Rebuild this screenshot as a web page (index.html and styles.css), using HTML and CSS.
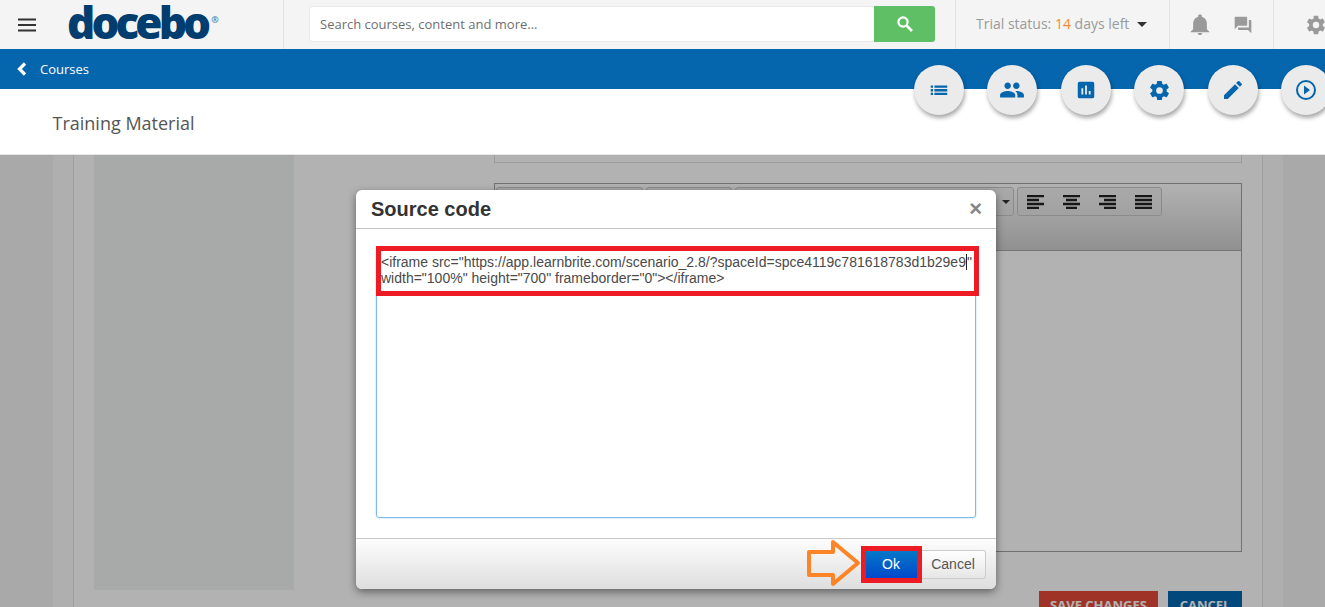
FILE: index.html
```html
<!DOCTYPE html>
<html lang="en">
<head>
<meta charset="utf-8">
<title>Training Material</title>
<link rel="stylesheet" href="styles.css">
</head>
<body>
<div class="page">
  <header class="topbar">
    <div class="brand">
      <svg class="menu" width="20" height="14" viewBox="0 0 20 14"><path d="M1 1.500h18M1 7h18M1 12.500h18" stroke="#333" stroke-width="2"/></svg>
      <span class="logo">docebo</span><span class="reg">®</span>
    </div>
    <div class="searchwrap">
      <div class="search">
        <div class="search-input">Search courses, content and more...</div>
        <div class="search-btn"><svg width="18" height="18" viewBox="0 0 18 18"><circle cx="7" cy="7" r="4.600" fill="none" stroke="#fff" stroke-width="2.200"/><path d="M10.500 10.500L16 16" stroke="#fff" stroke-width="2.600"/></svg></div>
      </div>
    </div>
    <div class="trial">Trial status: <span class="days">14</span> days left<i class="caret"></i></div>
    <div class="notes">
      <svg width="22" height="22" viewBox="0 0 24 24" fill="#9a9a9a"><path d="M12 23c1.300 0 2.400-1 2.400-2.400H9.600c0 1.400 1.100 2.400 2.400 2.400zm7.500-6.500v-6c0-3.700-2-6.700-5.500-7.500V2.200C14 1 13.100.5 12 .5S10 1 10 2.200V3c-3.500.8-5.500 3.800-5.500 7.500v6L2 19v.8h20V19z"/></svg>
      <svg width="20" height="20" viewBox="0 0 24 24" fill="#9a9a9a"><path d="M21 6h-2v9H6v2c0 .6.400 1 1 1h11l4 4V7c0-.6-.4-1-1-1zm-4 6V3c0-.6-.4-1-1-1H3c-.6 0-1 .4-1 1v14l4-4h10c.6 0 1-.4 1-1z"/></svg>
    </div>
    <div class="cog">
      <svg width="22" height="22" viewBox="0 0 24 24" fill="#9a9a9a"><path d="M19.400 13c.04-.3.06-.65.06-1s-.02-.7-.06-1l2.100-1.650c.2-.15.25-.43.12-.65l-2-3.460c-.12-.22-.4-.3-.6-.22l-2.500 1c-.52-.4-1.080-.73-1.700-.98l-.37-2.650A.5.500 0 0 0 14 2h-4c-.25 0-.46.180-.5.420l-.37 2.650c-.62.250-1.180.590-1.700.980l-2.500-1c-.22-.08-.48 0-.6.220l-2 3.460c-.13.220-.07.500.12.650L4.570 11c-.04.320-.07.660-.07 1s.03.680.07 1l-2.100 1.650c-.2.150-.25.430-.12.650l2 3.460c.12.220.38.300.6.220l2.500-1c.52.400 1.080.730 1.700.980l.37 2.650c.04.240.25.420.5.420h4c.25 0 .46-.180.5-.420l.37-2.650c.62-.250 1.180-.590 1.700-.980l2.500 1c.22.080.48 0 .6-.220l2-3.460c.12-.220.07-.500-.12-.650zM12 15.500A3.500 3.500 0 1 1 12 8.500a3.500 3.500 0 0 1 0 7z"/></svg>
    </div>
  </header>
  <nav class="bluebar">
    <svg width="10" height="14" viewBox="0 0 10 14"><path d="M8 1.500L2.500 7 8 12.500" fill="none" stroke="#fff" stroke-width="3.200"/></svg>
    <span class="crumb">Courses</span>
  </nav>
  <div class="titlebar"><h1 class="title">Training Material</h1></div>
  <main class="back">
    <div class="back-frame">
      <div class="sidebar"></div>
      <div class="editor-col">
        <div class="field-top"></div>
        <div class="editor">
          <div class="toolbar">
            <div class="tool w1"></div>
            <div class="tool w2"></div>
            <div class="tool w3"><i class="mini-caret"></i></div>
            <div class="tool aligns">
              <span class="al"><svg width="17" height="14" viewBox="0 0 17 14"><path d="M0 1h17M0 5h12M0 9h17M0 13h12" stroke="#222" stroke-width="2.400"/></svg></span>
              <span class="al"><svg width="17" height="14" viewBox="0 0 17 14"><path d="M0 1h17M3 5h11M0 9h17M3 13h11" stroke="#222" stroke-width="2.400"/></svg></span>
              <span class="al"><svg width="17" height="14" viewBox="0 0 17 14"><path d="M0 1h17M5 5h12M0 9h17M5 13h12" stroke="#222" stroke-width="2.400"/></svg></span>
              <span class="al"><svg width="17" height="14" viewBox="0 0 17 14"><path d="M0 1h17M0 5h17M0 9h17M0 13h17" stroke="#222" stroke-width="2.400"/></svg></span>
            </div>
          </div>
        </div>
        <div class="actions">
          <span class="act save">SAVE CHANGES</span>
          <span class="act cancel">CANCEL</span>
        </div>
      </div>
    </div>
  </main>
  <div class="scrim"></div>
  <div class="fabs">
    <span class="fab"><svg width="22" height="22" viewBox="0 0 24 24" fill="#0565ad"><path d="M3 7h2.500v2.500H3zm0 4h2.500v2.500H3zm0 4h2.500v2.500H3zM7 7h14v2.500H7zm0 4h14v2.500H7zm0 4h14v2.500H7z"/></svg></span>
    <span class="fab"><svg width="26" height="26" viewBox="0 0 24 24" fill="#0565ad"><path d="M16 11c1.700 0 3-1.400 3-3s-1.300-3-3-3-3 1.400-3 3 1.300 3 3 3zm-8 0c1.700 0 3-1.400 3-3S9.700 5 8 5 5 6.400 5 8s1.300 3 3 3zm0 2c-2.300 0-7 1.200-7 3.500V19h14v-2.500C15 14.200 10.300 13 8 13zm8 0h-1c1.200.9 2 2 2 3.500V19h6v-2.500c0-2.300-4.700-3.500-7-3.500z"/></svg></span>
    <span class="fab"><svg width="22" height="22" viewBox="0 0 24 24" fill="#0565ad"><path d="M19 3H5a2 2 0 0 0-2 2v14a2 2 0 0 0 2 2h14a2 2 0 0 0 2-2V5a2 2 0 0 0-2-2zM9 17H7v-7h2zm4 0h-2V7h2zm4 0h-2v-4h2z"/></svg></span>
    <span class="fab"><svg width="23" height="23" viewBox="0 0 24 24" fill="#0565ad"><path d="M19.400 13c.04-.3.06-.65.06-1s-.02-.7-.06-1l2.100-1.650c.2-.15.25-.43.12-.65l-2-3.460c-.12-.22-.4-.3-.6-.22l-2.500 1c-.52-.4-1.080-.73-1.700-.98l-.37-2.650A.5.500 0 0 0 14 2h-4c-.25 0-.46.180-.5.420l-.37 2.650c-.62.250-1.180.590-1.700.980l-2.500-1c-.22-.08-.48 0-.6.220l-2 3.460c-.13.220-.07.500.12.650L4.570 11c-.04.320-.07.660-.07 1s.03.680.07 1l-2.100 1.650c-.2.150-.25.430-.12.650l2 3.460c.12.220.38.300.6.220l2.500-1c.52.400 1.080.730 1.700.980l.37 2.650c.04.240.25.420.5.420h4c.25 0 .46-.180.5-.420l.37-2.650c.62-.250 1.180-.590 1.700-.980l2.500 1c.22.080.48 0 .6-.220l2-3.460c.12-.220.07-.500-.12-.650zM12 15.500A3.500 3.500 0 1 1 12 8.500a3.500 3.500 0 0 1 0 7z"/></svg></span>
    <span class="fab"><svg width="24" height="24" viewBox="0 0 24 24" fill="#0565ad"><path d="M3 17.250V21h3.750L17.800 9.940l-3.750-3.750zM20.700 7.040a1 1 0 0 0 0-1.410l-2.340-2.340a1 1 0 0 0-1.410 0l-1.830 1.830 3.750 3.750z"/></svg></span>
    <span class="fab"><svg width="24" height="24" viewBox="0 0 24 24" fill="#0565ad"><path d="M12 2a10 10 0 1 0 0 20 10 10 0 0 0 0-20zm0 18a8 8 0 1 1 0-16 8 8 0 0 1 0 16zM10 16.500l6-4.500-6-4.500z"/></svg></span>
  </div>
  <section class="dialog">
    <div class="dlg-head">
      <h2 class="dlg-title">Source code</h2>
      <span class="dlg-close">×</span>
    </div>
    <div class="dlg-body">
      <div class="source">&lt;iframe src="https://app.learnbrite.com/scenario_2.8/?spaceId=spce4119c781618783d1b29e9<span class="cursor"></span>"<br>width="100%" height="700" frameborder="0"&gt;&lt;/iframe&gt;</div>
      <div class="mark-source"></div>
    </div>
    <div class="dlg-foot">
      <svg class="arrow" width="56" height="50" viewBox="0 0 56 50"><path d="M2 13h24V3l25 21-25 21V36H2z" fill="none" stroke="#fd8527" stroke-width="4" stroke-linejoin="round"/></svg>
      <span class="ok-mark"><button class="btn-ok">Ok</button></span>
      <button class="btn-cancel">Cancel</button>
    </div>
  </section>
</div>
</body>
</html>
```
FILE: styles.css
```css
* { box-sizing: border-box; }
html, body { margin: 0; height: 100%; overflow: hidden; }
body { font-family: "Open Sans", sans-serif; background: #fff; }
.page { position: relative; width: 1325px; height: 607px; overflow: hidden; display: flex; flex-direction: column; }

.topbar { height: 49px; flex: none; background: #f4f4f4; display: flex; align-items: stretch; }
.brand { width: 284px; flex: none; display: flex; align-items: center; padding-left: 17px; border-right: 1px solid #e2e2e2; }
.menu { flex: none; }
.logo { margin: 0 0 4px 30px; font-weight: 800; font-size: 44px; line-height: 41px; letter-spacing: -3.900px; color: #023d6f; }
.reg { font-size: 9px; color: #4e7ea5; align-self: flex-start; margin: 13px 0 0 4px; font-weight: 700; }
.searchwrap { width: 672px; flex: none; padding: 6px 20px 7px 25px; border-right: 1px solid #e2e2e2; }
.search { display: flex; height: 36px; background: #fff; border: 1px solid #e9e9e9; border-radius: 3px; }
.search-input { flex: 1; font-size: 13px; line-height: 34px; color: #6f6f6f; padding-left: 10px; }
.search-btn { width: 61px; margin: -1px; background: #5ebf64; border-radius: 0 3px 3px 0; display: flex; align-items: center; justify-content: center; }
.trial { width: 214px; flex: none; padding-left: 20px; font-size: 14px; line-height: 48px; color: #9a9a9a; border-right: 1px solid #e2e2e2; white-space: nowrap; }
.days { color: #f18a32; }
.caret { display: inline-block; margin-left: 8px; vertical-align: 2px; border: 5px solid transparent; border-top-color: #333; border-bottom: 0; }
.notes { width: 104px; flex: none; display: flex; align-items: center; gap: 22px; padding-left: 19px; border-right: 1px solid #e2e2e2; }
.cog { flex: none; padding-left: 31px; display: flex; align-items: center; }

.bluebar { height: 40px; flex: none; background: #0565ad; display: flex; align-items: center; padding-left: 17px; gap: 13px; }
.crumb { color: #fff; font-size: 13px; }
.titlebar { height: 66px; flex: none; background: #fff; padding-left: 52.500px; border-bottom: 1px solid #e6e6e6; }
.title { margin: 0; font-weight: 400; font-size: 18px; line-height: 68px; color: #555; }

.back { flex: 1; background: #f2f2f2; min-height: 0; padding: 0 42px 0 53px; }
.back-frame { position: relative; height: 100%; display: flex; background: #fff; border-left: 21px solid #fbfbfb; border-right: 21px solid #fbfbfb; }
.back-frame::before { content: ""; position: absolute; left: -1px; top: 0; bottom: 0; width: 1px; background: #e3e3e3; }
.back-frame::after { content: ""; position: absolute; right: -1px; top: 0; bottom: 0; width: 1px; background: #e3e3e3; }
.sidebar { width: 200px; height: 435px; flex: none; background: #f1f4f2; margin-left: 20px; }
.editor-col { width: 748px; margin-left: 200px; flex: none; }
.field-top { height: 8px; border: 1px solid #dedede; border-top: 0; }
.editor { height: 369px; margin-top: 20px; border: 1px solid #a3a3a3; background: #fff; }
.toolbar { height: 67px; display: flex; align-items: flex-start; gap: 3px; padding: 3px 0 0 1px; background: linear-gradient(#fff, #cfcfcf); border-bottom: 1px solid #a8a8a8; }
.tool { height: 29px; background: linear-gradient(#f2f2f2, #e8e8e8); border: 1px solid #c8c8c8; border-radius: 3px; display: flex; }
.w1 { width: 147px; }
.w2 { width: 86px; }
.w3 { width: 279px; justify-content: flex-end; align-items: center; padding-right: 3px; }
.mini-caret { border: 4px solid transparent; border-top-color: #333; border-bottom: 0; }
.aligns { width: 145px; }
.al { width: 36px; display: flex; align-items: center; justify-content: center; }
.actions { display: flex; justify-content: flex-end; gap: 10px; margin-top: 39px; }
.act { height: 40px; padding-top: 5px; color: #fff; font-size: 13px; font-weight: 700; text-align: center; white-space: nowrap; }
.save { width: 119px; background: #e64a3a; }
.cancel { width: 74px; background: #0568af; }

.scrim { position: absolute; left: 0; right: 0; top: 155px; bottom: 0; background: rgba(0,0,0,.3); }

.fabs { position: absolute; left: 914px; top: 65px; display: flex; gap: 23.400px; }
.fab { width: 50px; height: 50px; flex: none; border-radius: 50%; background: #ebebeb; box-shadow: 1px 3px 4px rgba(0,0,0,.35); display: flex; align-items: center; justify-content: center; }

.dialog { position: absolute; left: 356px; top: 190px; width: 640px; height: 399px; background: #fff; border-radius: 6px; box-shadow: 0 3px 8px rgba(0,0,0,.45); display: flex; flex-direction: column; font-family: "Liberation Sans", Arial, sans-serif; }
.dlg-head { height: 39px; flex: none; display: flex; justify-content: space-between; padding: 0 14px 0 15px; border-bottom: 1px solid #c5c5c5; }
.dlg-title { margin: 0; font-size: 20px; font-weight: 700; line-height: 38px; color: #333; }
.dlg-close { font-size: 22px; font-weight: 700; line-height: 38px; color: #858585; }
.dlg-body { flex: 1; padding: 20px; position: relative; }
.source { height: 270px; margin-top: -1px; border: 1px solid #7fb9ec; border-radius: 3px; box-shadow: 0 0 2px rgba(82,168,236,.5); padding: 5px 4px; font-size: 14px; line-height: 16px; color: #4a4a4a; white-space: nowrap; }
.cursor { display: inline-block; width: 1px; height: 16px; background: #222; vertical-align: -3px; }
.mark-source { position: absolute; left: 20px; top: 17px; width: 603px; height: 50px; border: 5px solid #ed1c24; }
.dlg-foot { height: 51px; flex: none; display: flex; align-items: center; justify-content: flex-end; padding: 0 10px 0 0; background: linear-gradient(#fdfdfd, #dedede); border-top: 1px solid #c9c9c9; border-radius: 0 0 6px 6px; position: relative; }
.arrow { position: absolute; left: 451px; top: 0; }
.ok-mark { border: 5px solid #ed1c24; height: 37px; display: flex; }
button { font-family: inherit; font-size: 14px; }
.btn-ok { width: 51px; height: 27px; border: 0; padding: 0 1px 0 0; color: #fff; background: linear-gradient(#0478c6, #0149cb); }
.btn-cancel { width: 64px; height: 29px; padding: 0 1px 0 0; color: #555; background: linear-gradient(#fff, #e6e6e6); border: 1px solid #ccc; border-left: 0; border-radius: 0 3px 3px 0; }
```
